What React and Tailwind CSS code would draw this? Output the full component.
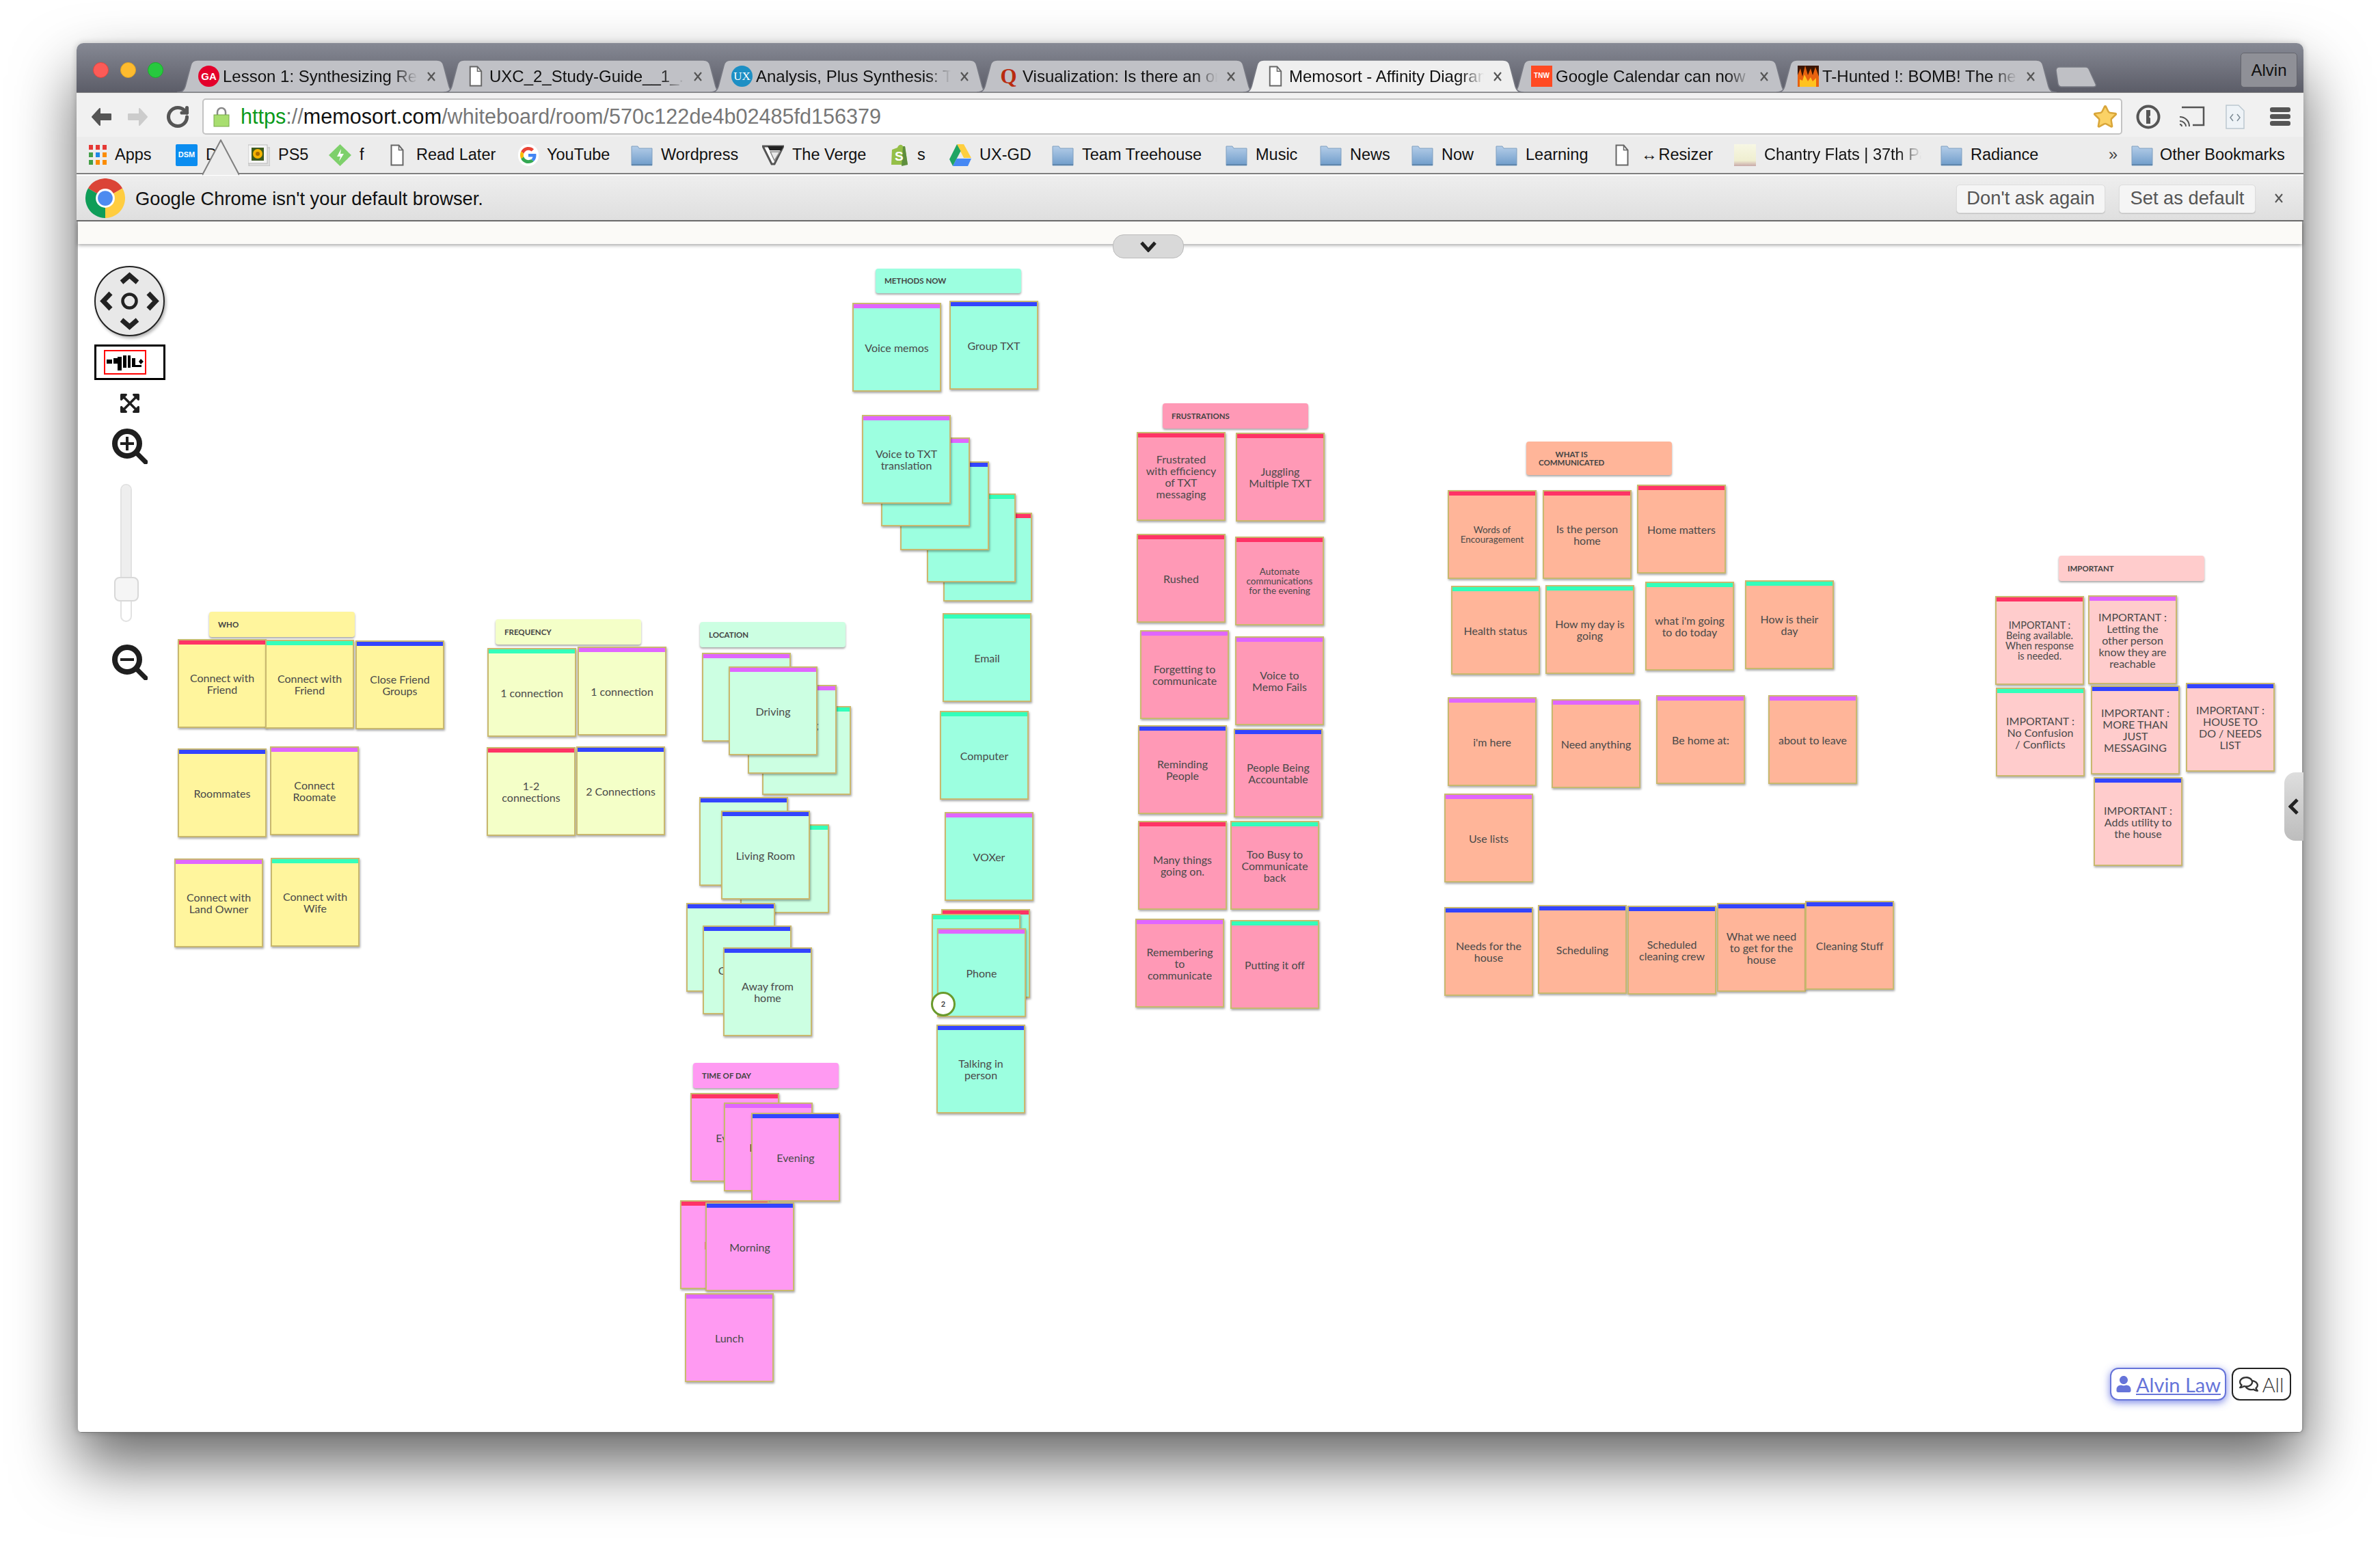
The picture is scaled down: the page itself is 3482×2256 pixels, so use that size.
import { RotateCw, Star } from "lucide-react";
import { FaUser, FaRegComments, FaExpandArrowsAlt } from "react-icons/fa";

const strip = {
  r: "bg-[#ff3366]",
  g: "bg-[#33ffbb]",
  b: "bg-[#3344ff]",
  p: "bg-[#e066ff]",
};

const YELLOW = "bg-[#fff59d]";
const LIME = "bg-[#f4ffc8]";
const MINT = "bg-[#9cffe0]";
const PALE = "bg-[#ccffe2]";
const PINK = "bg-[#ff9af2]";
const ROSE = "bg-[#ff99b6]";
const PEACH = "bg-[#ffb599]";
const BLUSH = "bg-[#ffcccc]";

const SMALL = "text-[13.5px] leading-[14px]";
const MID = "text-[14.5px] leading-[15px]";

const headers = [
  { x: 306, y: 895, h: "h-[37px]", bg: YELLOW, t: "WHO" },
  { x: 725, y: 906, h: "h-[37px]", bg: LIME, t: "FREQUENCY" },
  { x: 1024, y: 910, h: "h-[37px]", bg: PALE, t: "LOCATION" },
  { x: 1281, y: 393, h: "h-[36px]", bg: MINT, t: "METHODS NOW" },
  { x: 1014, y: 1555, h: "h-[37px]", bg: PINK, t: "TIME OF DAY" },
  { x: 1701, y: 590, h: "h-[37px]", bg: ROSE, t: "FRUSTRATIONS" },
  { x: 3012, y: 813, h: "h-[37px]", bg: BLUSH, t: "IMPORTANT" },
];

// back to front, coordinates are screen px of the board
const notes = [
  { x: 260, y: 935, c: "r", bg: YELLOW, t: "Connect with\nFriend" },
  { x: 388, y: 936, c: "g", bg: YELLOW, t: "Connect with\nFriend" },
  { x: 520, y: 937, c: "b", bg: YELLOW, t: "Close Friend\nGroups" },
  { x: 260, y: 1095, c: "b", bg: YELLOW, t: "Roommates" },
  { x: 395, y: 1092, c: "p", bg: YELLOW, t: "Connect\nRoomate" },
  { x: 255, y: 1256, c: "p", bg: YELLOW, t: "Connect with\nLand Owner" },
  { x: 396, y: 1255, c: "g", bg: YELLOW, t: "Connect with\nWife" },

  { x: 713, y: 948, c: "g", bg: LIME, t: "1 connection" },
  { x: 845, y: 946, c: "p", bg: LIME, t: "1 connection" },
  { x: 712, y: 1093, c: "r", bg: LIME, t: "1-2\nconnections" },
  { x: 843, y: 1092, c: "b", bg: LIME, t: "2 Connections" },

  { x: 1027, y: 955, c: "p", bg: PALE, t: "" },
  { x: 1115, y: 1033, c: "g", bg: PALE, t: "" },
  { x: 1094, y: 1002, c: "p", bg: PALE, t: "Commuting", s: "text-[15px] leading-[17px] pb-[12px]" },
  { x: 1066, y: 975, c: "p", bg: PALE, t: "Driving" },
  { x: 1083, y: 1206, c: "g", bg: PALE, t: "" },
  { x: 1023, y: 1166, c: "b", bg: PALE, t: "" },
  { x: 1055, y: 1186, c: "b", bg: PALE, t: "Living Room" },
  { x: 1004, y: 1321, c: "b", bg: PALE, t: "" },
  { x: 1028, y: 1354, c: "b", bg: PALE, t: "Coffee shop" },
  { x: 1058, y: 1386, c: "b", bg: PALE, t: "Away from\nhome" },

  { x: 1010, y: 1599, c: "r", bg: PINK, t: "Evening" },
  { x: 1059, y: 1613, c: "p", bg: PINK, t: "Evening" },
  { x: 1099, y: 1628, c: "b", bg: PINK, t: "Evening" },
  { x: 995, y: 1756, c: "r", bg: PINK, t: "Morning" },
  { x: 1032, y: 1759, c: "b", bg: PINK, t: "Morning" },
  { x: 1002, y: 1892, c: "p", bg: PINK, t: "Lunch" },

  { x: 1247, y: 443, c: "p", bg: MINT, t: "Voice memos" },
  { x: 1389, y: 440, c: "b", bg: MINT, t: "Group TXT" },
  { x: 1380, y: 750, c: "r", bg: MINT, t: "" },
  { x: 1356, y: 722, c: "g", bg: MINT, t: "" },
  { x: 1317, y: 675, c: "b", bg: MINT, t: "" },
  { x: 1289, y: 640, c: "p", bg: MINT, t: "" },
  { x: 1261, y: 607, c: "p", bg: MINT, t: "Voice to TXT\ntranslation" },
  { x: 1379, y: 897, c: "g", bg: MINT, t: "Email" },
  { x: 1375, y: 1040, c: "g", bg: MINT, t: "Computer" },
  { x: 1382, y: 1188, c: "p", bg: MINT, t: "VOXer" },
  { x: 1377, y: 1330, c: "r", bg: MINT, t: "" },
  { x: 1363, y: 1337, c: "g", bg: MINT, t: "" },
  { x: 1371, y: 1358, c: "p", bg: MINT, t: "Phone" },
  { x: 1370, y: 1499, c: "b", bg: MINT, t: "Talking in\nperson" },

  { x: 1663, y: 632, c: "r", bg: ROSE, t: "Frustrated\nwith efficiency\nof TXT\nmessaging" },
  { x: 1808, y: 633, c: "r", bg: ROSE, t: "Juggling\nMultiple TXT" },
  { x: 1663, y: 781, c: "r", bg: ROSE, t: "Rushed" },
  { x: 1807, y: 785, c: "r", bg: ROSE, t: "Automate\ncommunications\nfor the evening", s: SMALL },
  { x: 1668, y: 922, c: "p", bg: ROSE, t: "Forgetting to\ncommunicate" },
  { x: 1807, y: 931, c: "p", bg: ROSE, t: "Voice to\nMemo Fails" },
  { x: 1665, y: 1061, c: "b", bg: ROSE, t: "Reminding\nPeople" },
  { x: 1805, y: 1066, c: "b", bg: ROSE, t: "People Being\nAccountable" },
  { x: 1665, y: 1201, c: "r", bg: ROSE, t: "Many things\ngoing on." },
  { x: 1800, y: 1201, c: "g", bg: ROSE, t: "Too Busy to\nCommunicate\nback" },
  { x: 1661, y: 1344, c: "p", bg: ROSE, t: "Remembering\nto\ncommunicate" },
  { x: 1800, y: 1346, c: "g", bg: ROSE, t: "Putting it off" },

  { x: 2118, y: 717, c: "r", bg: PEACH, t: "Words of\nEncouragement", s: SMALL },
  { x: 2257, y: 717, c: "r", bg: PEACH, t: "Is the person\nhome" },
  { x: 2395, y: 709, c: "r", bg: PEACH, t: "Home matters" },
  { x: 2123, y: 857, c: "g", bg: PEACH, t: "Health status" },
  { x: 2261, y: 856, c: "g", bg: PEACH, t: "How my day is\ngoing" },
  { x: 2407, y: 851, c: "g", bg: PEACH, t: "what i'm going\nto do today" },
  { x: 2553, y: 849, c: "g", bg: PEACH, t: "How is their\nday" },
  { x: 2118, y: 1020, c: "p", bg: PEACH, t: "i'm here" },
  { x: 2270, y: 1023, c: "p", bg: PEACH, t: "Need anything" },
  { x: 2423, y: 1017, c: "p", bg: PEACH, t: "Be home at:" },
  { x: 2587, y: 1017, c: "p", bg: PEACH, t: "about to leave" },
  { x: 2113, y: 1161, c: "p", bg: PEACH, t: "Use lists" },
  { x: 2113, y: 1327, c: "b", bg: PEACH, t: "Needs for the\nhouse" },
  { x: 2250, y: 1324, c: "b", bg: PEACH, t: "Scheduling" },
  { x: 2381, y: 1325, c: "b", bg: PEACH, t: "Scheduled\ncleaning crew" },
  { x: 2512, y: 1321, c: "b", bg: PEACH, t: "What we need\nto get for the\nhouse" },
  { x: 2641, y: 1318, c: "b", bg: PEACH, t: "Cleaning Stuff" },

  { x: 2919, y: 872, c: "r", bg: BLUSH, t: "IMPORTANT :\nBeing available.\nWhen response\nis needed.", s: MID },
  { x: 3055, y: 871, c: "p", bg: BLUSH, t: "IMPORTANT :\nLetting the\nother person\nknow they are\nreachable" },
  { x: 2920, y: 1006, c: "g", bg: BLUSH, t: "IMPORTANT :\nNo Confusion\n/ Conflicts" },
  { x: 3059, y: 1003, c: "b", bg: BLUSH, t: "IMPORTANT :\nMORE THAN\nJUST\nMESSAGING" },
  { x: 3198, y: 999, c: "b", bg: BLUSH, t: "IMPORTANT :\nHOUSE TO\nDO / NEEDS\nLIST" },
  { x: 3063, y: 1137, c: "b", bg: BLUSH, t: "IMPORTANT :\nAdds utility to\nthe house" },
];

const tabs = [
  { icon: "ga", t: "Lesson 1: Synthesizing Research" },
  { icon: "doc", t: "UXC_2_Study-Guide__1_.pdf" },
  { icon: "ux", t: "Analysis, Plus Synthesis: Turning" },
  { icon: "q", t: "Visualization: Is there an online" },
  { icon: "doc", t: "Memosort - Affinity Diagram", active: true },
  { icon: "tnw", t: "Google Calendar can now help" },
  { icon: "fire", t: "T-Hunted !: BOMB! The new" },
];

function Folder() {
  return (
    <svg width="32" height="32" viewBox="0 0 32 32" className="shrink-0">
      <defs>
        <linearGradient id="fold" x1="0" y1="0" x2="0" y2="1">
          <stop offset="0" stopColor="#b4cde8" />
          <stop offset="1" stopColor="#6f9cca" />
        </linearGradient>
      </defs>
      <path d="M1 3h9l2 3h19v25H1z" fill="url(#fold)" stroke="#7f9fc0" strokeWidth="1" />
      <path d="M1 29h30v2H1z" fill="#5f86ad" />
    </svg>
  );
}

function DocIcon({ w = 20, h = 32 }) {
  return (
    <svg width={w} height={h} viewBox="0 0 20 32" className="shrink-0">
      <path d="M1.5 1.5h11l6 7v22h-17z" fill="#fff" stroke="#666" strokeWidth="2" />
      <path d="M12.5 1.5v7h6" fill="none" stroke="#666" strokeWidth="1.5" />
    </svg>
  );
}

function BookmarkDoc() {
  return (
    <div className="w-[26px] shrink-0">
      <DocIcon />
    </div>
  );
}

function GoogleIcon() {
  return (
    <div className="w-[30px] h-[32px] rounded-full bg-white flex items-center justify-center shrink-0">
      <svg width="24" height="24" viewBox="0 0 48 48">
        <path fill="#EA4335" d="M24 9.5c3.54 0 6.71 1.22 9.21 3.6l6.85-6.85C35.9 2.38 30.47 0 24 0 14.62 0 6.51 5.38 2.56 13.22l7.98 6.19C12.43 13.72 17.74 9.5 24 9.5z" />
        <path fill="#4285F4" d="M46.98 24.55c0-1.57-.15-3.09-.38-4.55H24v9.02h12.94c-.58 2.96-2.26 5.48-4.78 7.18l7.73 6c4.51-4.18 7.09-10.36 7.09-17.65z" />
        <path fill="#FBBC05" d="M10.53 28.59c-.48-1.45-.76-2.99-.76-4.59s.27-3.14.76-4.59l-7.98-6.19C.92 16.46 0 20.12 0 24c0 3.88.92 7.54 2.56 10.78l7.97-6.19z" />
        <path fill="#34A853" d="M24 48c6.48 0 11.93-2.13 15.89-5.81l-7.73-6c-2.15 1.45-4.92 2.3-8.16 2.3-6.26 0-11.57-4.22-13.47-9.91l-7.98 6.19C6.51 42.62 14.62 48 24 48z" />
      </svg>
    </div>
  );
}

function AppsIcon() {
  const cells = ["#e53935", "#e53935", "#e53935", "#43a047", "#1e88e5", "#fb8c00", "#43a047", "#fb8c00", "#fb8c00"];
  return (
    <div className="grid grid-cols-3 gap-[4px] w-[26px] shrink-0">
      {cells.map((c, i) => (
        <svg key={i} width="6" height="7" viewBox="0 0 6 7">
          <rect width="6" height="7" fill={c} />
        </svg>
      ))}
    </div>
  );
}

function DsmIcon() {
  return (
    <div className="w-[32px] h-[32px] rounded-[2px] bg-[#0b8df0] text-white text-[11px] leading-none font-bold flex items-center justify-center shrink-0">
      DSM
    </div>
  );
}

function Ps5Icon() {
  return (
    <svg width="32" height="32" viewBox="0 0 32 32" className="shrink-0">
      <rect x="1" y="5" width="31" height="27" fill="#ddd" stroke="#bbb" />
      <rect x="0" y="1" width="28" height="27" fill="#f4f4f4" stroke="#bbb" />
      <rect x="5" y="5" width="18" height="19" fill="#3d5a1e" />
      <circle cx="14" cy="14" r="7" fill="#f5b400" />
      <circle cx="14" cy="14" r="3" fill="#a86a00" />
    </svg>
  );
}

function GreenDiamond() {
  return (
    <svg width="33" height="32" viewBox="0 0 33 32" className="shrink-0">
      <path d="M16.5 0L33 16 16.5 32 0 16z" fill="#7ed06b" />
      <path d="M18 7l-6 11h5l-2 7 7-11h-5z" fill="#fff" />
    </svg>
  );
}

function VergeIcon() {
  return (
    <svg width="32" height="30" viewBox="0 0 32 30" className="shrink-0">
      <path d="M1 2h30L18 28 14 28z" fill="#fff" stroke="#555" strokeWidth="3" />
      <path d="M8 2h23l-3 6H11z" fill="#222" />
      <path d="M12 10h14l-8 13z" fill="#e9e9e9" stroke="#888" strokeWidth="1.5" />
    </svg>
  );
}

function ShopifyIcon() {
  return (
    <div className="relative w-[28px] h-[32px] shrink-0">
      <svg width="28" height="32" viewBox="0 0 28 32">
        <path d="M3 8l8-3c1-4 6-6 8-2l3 0 4 27-24-0z" fill="#95bf47" />
        <path d="M19 3l3 0 4 27-9 2z" fill="#5e8e3e" />
      </svg>
      <span className="absolute left-[7px] top-[8px] text-white font-bold text-[19px] leading-none">S</span>
    </div>
  );
}

function DriveIcon() {
  return (
    <svg width="32" height="32" viewBox="0 0 32 32" className="shrink-0">
      <path d="M11 0h10l11 20H21z" fill="#ffcf3f" />
      <path d="M11 0l5.5 10L5 32 0 22z" fill="#1fa463" />
      <path d="M10.5 21H32l-5 11H5z" fill="#4688f4" />
    </svg>
  );
}

function ThumbIcon() {
  return (
    <svg width="32" height="32" viewBox="0 0 32 32" className="shrink-0">
      <defs>
        <linearGradient id="thumb" x1="0" y1="0" x2="0" y2="1">
          <stop offset="0" stopColor="#f7f7e4" />
          <stop offset="0.75" stopColor="#efeed0" />
          <stop offset="1" stopColor="#c8a9a9" />
        </linearGradient>
      </defs>
      <rect width="32" height="32" fill="url(#thumb)" />
    </svg>
  );
}

const bookmarks = [
  { w: "w-[127px]", icon: <AppsIcon />, t: "Apps" },
  { w: "w-[106px]", icon: <DsmIcon />, t: "D" },
  { w: "w-[118px]", icon: <Ps5Icon />, t: "PS5" },
  { w: "w-[90px]", icon: <GreenDiamond />, t: "f" },
  { w: "w-[187px]", icon: <BookmarkDoc />, t: "Read Later" },
  { w: "w-[165px]", icon: <GoogleIcon />, t: "YouTube" },
  { w: "w-[192px]", icon: <Folder />, t: "Wordpress" },
  { w: "w-[187px]", icon: <VergeIcon />, t: "The Verge" },
  { w: "w-[87px]", icon: <ShopifyIcon />, t: "s" },
  { w: "w-[150px]", icon: <DriveIcon />, t: "UX-GD" },
  { w: "w-[254px]", icon: <Folder />, t: "Team Treehouse" },
  { w: "w-[138px]", icon: <Folder />, t: "Music" },
  { w: "w-[134px]", icon: <Folder />, t: "News" },
  { w: "w-[123px]", icon: <Folder />, t: "Now" },
  { w: "w-[175px]", icon: <Folder />, t: "Learning" },
  { w: "w-[174px]", icon: <BookmarkDoc />, t: "↔\u200AResizer" },
  { w: "w-[302px]", icon: <ThumbIcon />, t: "Chantry Flats | 37th Parallel", fade: true },
  { w: "w-[246px]", icon: <Folder />, t: "Radiance" },
];

function Favicon({ name }) {
  if (name === "doc") return <DocIcon w={20} h={31} />;
  if (name === "ga")
    return (
      <div className="w-[31px] h-[31px] rounded-full bg-[#e4002b] text-white text-[15px] leading-none font-bold flex items-center justify-center">
        GA
      </div>
    );
  if (name === "ux")
    return (
      <div className="w-[31px] h-[31px] rounded-full bg-[#1d8fc4] text-white text-[17px] leading-none font-['Liberation_Serif',serif] flex items-center justify-center">
        UX
      </div>
    );
  if (name === "q")
    return (
      <div className="w-[24px] h-[31px] text-[#b92b0f] text-[31px] leading-[31px] font-bold font-['Liberation_Serif',serif] text-center">
        Q
      </div>
    );
  if (name === "tnw")
    return (
      <div className="w-[31px] h-[31px] bg-[#ff4a22] text-white text-[10px] leading-none font-bold flex items-center justify-center">
        TNW
      </div>
    );
  return (
    <svg width="31" height="31" viewBox="0 0 31 31">
      <rect width="31" height="31" fill="#3a1503" />
      <path d="M0 31V14l4-10 3 12 4-16 4 14 4-10 3 10 4-12 5 14v15z" fill="#e8620f" />
      <path d="M3 31V20l4 2 3-9 5 10 4-6 3 6 5-5v13z" fill="#ffc21f" />
    </svg>
  );
}

function Tab({ icon, t, active }) {
  return (
    <div className={`relative w-[410px] h-[48px] -ml-[20px] first:ml-0 shrink-0 ${active ? "z-10" : ""}`}>
      <svg width="410" height="48" viewBox="0 0 410 48" className="absolute inset-0">
        <path
          d="M0 48c8 0 11-3 13-12L20 9c1-5 5-8 10-8h350c5 0 9 3 10 8l7 27c2 9 5 12 13 12z"
          fill={active ? "#efefef" : "#c0c1c6"}
          stroke="#777983"
          strokeWidth="1.5"
        />
      </svg>
      <div className="relative h-full flex items-center pl-[31px] pt-[2px]">
        <div className="w-[31px] flex justify-center shrink-0 -mt-[2px]">
          <Favicon name={icon} />
        </div>
        <div className="w-[285px] ml-[5px] overflow-hidden whitespace-nowrap text-[24px] leading-[30px] text-[#111] [mask-image:linear-gradient(to_right,black_88%,transparent)]">
          {t}
        </div>
        <svg width="14" height="14" viewBox="0 0 14 14" className="ml-[13px] shrink-0">
          <path d="M2 1l10 12M12 1L2 13" stroke="#555" strokeWidth="2.2" />
        </svg>
      </div>
    </div>
  );
}

function Note({ x, y, c, bg, t, s }) {
  return (
    <div
      className={`absolute w-[130px] h-[130px] border-2 border-[#c9b86e] flex items-center justify-center text-center whitespace-pre-line text-[#4a4a4a] font-['Lato',sans-serif] shadow-[1px_2px_3px_rgba(0,0,0,0.35)] ${bg} ${s || "text-[16px] leading-[17px]"}`}
      style={{ left: x - 112, top: y - 324 }}
    >
      <div className={`absolute left-0 right-0 top-0 h-[6px] ${strip[c]}`} />
      {t}
    </div>
  );
}

function Header({ x, y, h, bg, t }) {
  return (
    <div
      className={`absolute w-[213px] ${h} rounded-[4px] pl-[13px] flex items-center text-[11.5px] font-bold text-[#444] font-['Lato',sans-serif] shadow-[0_2px_3px_rgba(0,0,0,0.35)] ${bg}`}
      style={{ left: x - 112, top: y - 324 }}
    >
      {t}
    </div>
  );
}

function ChromeLogo() {
  return (
    <svg width="58" height="58" viewBox="0 0 48 48" className="shrink-0">
      <path d="M24 24L3.2 12A24 24 0 0 1 44.8 12z" fill="#db4437" />
      <path d="M24 24L44.8 12A24 24 0 0 1 24 48z" fill="#ffcd40" />
      <path d="M24 24L24 48A24 24 0 0 1 3.2 12z" fill="#0f9d58" />
      <circle cx="24" cy="24" r="11.5" fill="#fff" />
      <circle cx="24" cy="24" r="9" fill="#4d8bf0" />
    </svg>
  );
}

function ZoomIcon({ plus }) {
  return (
    <svg width="52" height="52" viewBox="0 0 52 52">
      <circle cx="22" cy="22" r="18" fill="none" stroke="#1f1f1f" strokeWidth="8" />
      <path d="M35 35l14 14" stroke="#1f1f1f" strokeWidth="7" strokeLinecap="round" />
      <path d="M12 22h20" stroke="#1f1f1f" strokeWidth="4" />
      {plus && <path d="M22 12v20" stroke="#1f1f1f" strokeWidth="4" />}
    </svg>
  );
}

function NavPad() {
  return (
    <div className="w-[103px] h-[103px] rounded-full bg-[#e8e8e8] border-2 border-[#222] shadow-[2px_3px_4px_rgba(0,0,0,0.3)] flex items-center justify-center">
      <svg width="99" height="99" viewBox="0 0 99 99" fill="none" stroke="#222" strokeWidth="7">
        <path d="M38 22l11.5-10L61 22" />
        <path d="M38 77l11.5 10L61 77" />
        <path d="M22 38L11 49.5 22 61" />
        <path d="M77 38l11 11.5L77 61" />
        <circle cx="49.5" cy="49.5" r="10" strokeWidth="4.5" />
      </svg>
    </div>
  );
}

function MiniMap() {
  return (
    <div className="w-[104px] h-[52px] border-[3px] border-black flex items-center pl-[11px] bg-white">
      <div className="w-[62px] h-[36px] border-2 border-[#f00] flex items-center justify-center">
        <svg width="54" height="26" viewBox="0 0 54 26" className="blur-[0.6px]">
          <path d="M0 9h8v6H0zM10 7h9v8h-9zM16 5h6v20h-6zM24 3h5v18h-5zM31 3h4v18h-4zM37 7h5v10h9v3H37z" fill="#000" />
          <path d="M50 8l4 4-4 4-3-4z" fill="#000" />
        </svg>
      </div>
    </div>
  );
}

function ZoomSlider() {
  return (
    <div className="relative w-[17px] h-[202px] -ml-[10px] rounded-full border-2 border-[#e2e2e2] bg-white overflow-visible">
      <div className="h-[140px] rounded-t-full bg-[#eeeeee]" />
      <div className="absolute -left-[11px] top-[134px] w-[36px] h-[36px] rounded-[8px] border-2 border-[#d8d8d8] bg-[#f5f5f5]" />
    </div>
  );
}

export default function App() {
  return (
    <div className="w-[3482px] h-[2256px] bg-white pl-[112px] pt-[63px] overflow-hidden font-['Liberation_Sans',Arial,sans-serif]">
      <div className="w-[3258px] h-[2033px] flex flex-col rounded-t-[10px] rounded-b-[6px] shadow-[0_46px_90px_rgba(0,0,0,0.6),0_0_10px_rgba(0,0,0,0.2)]">
        {/* tab strip */}
        <div className="h-[73px] flex items-end rounded-t-[10px] bg-gradient-to-b from-[#868994] to-[#5c5d68] border-b border-[#8a8a8a]">
          <div className="flex gap-[17px] self-start mt-[28px] ml-[24px] mr-[20px]">
            <div className="w-[23px] h-[23px] rounded-full bg-[#fc5b57] border border-[#e0443e]" />
            <div className="w-[23px] h-[23px] rounded-full bg-[#febb2e] border border-[#dea123]" />
            <div className="w-[23px] h-[23px] rounded-full bg-[#27c93f] border border-[#1aab29]" />
          </div>
          <div className="flex items-end">
            {tabs.map((tab, i) => (
              <Tab key={i} {...tab} />
            ))}
          </div>
          <svg width="62" height="31" viewBox="0 0 62 31" className="self-start mt-[34px] -ml-[3px]">
            <path d="M2 6c0-3 2-5 5-5h38c3 0 5 2 6 5l9 20c1 2 0 4-3 4H10c-3 0-4-1-5-4z" fill="#bfc0c5" stroke="#777983" strokeWidth="1.5" />
          </svg>
          <div className="ml-auto mr-[9px] self-start mt-[14px] w-[83px] h-[51px] rounded-[5px] bg-[#8f9097] border border-[#63646c] flex items-center justify-center text-[24px] text-[#111]">
            Alvin
          </div>
        </div>

        {/* toolbar */}
        <div className="h-[64px] bg-[#f1f1f1] flex pt-[8px]">
          <div className="w-[184px] h-[53px] flex items-center shrink-0 pl-[20px]">
            <svg width="32" height="28" viewBox="0 0 32 28" className="shrink-0">
              <path d="M14 2L3 14l11 12v-8h16v-8H14z" fill="#555" stroke="#555" strokeWidth="2" strokeLinejoin="round" />
            </svg>
            <svg width="32" height="28" viewBox="0 0 32 28" className="ml-[22px] shrink-0">
              <path d="M18 2l11 12-11 12v-8H2v-8h16z" fill="#ccc" stroke="#ccc" strokeWidth="2" strokeLinejoin="round" />
            </svg>
            <RotateCw className="ml-[24px] shrink-0 text-[#555]" size={36} strokeWidth={3.4} />
          </div>
          <div className="w-[2809px] h-[53px] bg-white rounded-[5px] border-2 border-[#c3c3c3] flex items-center pl-[14px] pr-[4px] shrink-0">
            <svg width="24" height="30" viewBox="0 0 24 30" className="shrink-0">
              <path d="M6 13V8a6 6 0 0 1 12 0v5" fill="none" stroke="#888" strokeWidth="2.5" />
              <rect x="1" y="12" width="22" height="17" fill="#a8de6f" stroke="#78a84a" />
            </svg>
            <div className="ml-[16px] text-[30.6px] leading-none whitespace-nowrap text-[#777]">
              <span className="text-[#0a9a1a]">https</span>://<span className="text-[#111]">memosort.com</span>/whiteboard/room/570c122de4b02485fd156379
            </div>
            <Star className="ml-auto shrink-0 text-[#d9a63a] fill-[#fbd266]" size={38} strokeWidth={1.6} />
          </div>
          <div className="flex-1 h-[53px] flex items-center pl-[20px]">
            <svg width="36" height="36" viewBox="0 0 36 36" className="shrink-0">
              <circle cx="18" cy="18" r="15.5" fill="none" stroke="#555" strokeWidth="4" />
              <path d="M15 8h6v8l-2 2 2 2v8h-6z" fill="#555" />
            </svg>
            <svg width="38" height="32" viewBox="0 0 38 32" fill="none" stroke="#555" className="ml-[27px] shrink-0">
              <path d="M4 2h32v26H20" strokeWidth="2.5" />
              <path d="M1 16c8 0 14 6 14 14M1 22c5 0 9 4 9 8M1 27c2 0 3 1 3 3" strokeWidth="2" />
            </svg>
            <svg width="30" height="36" viewBox="0 0 30 36" className="ml-[29px] shrink-0">
              <path d="M2 1h18l8 8v26H2z" fill="#eef3f7" stroke="#bcc8d0" strokeWidth="1.5" />
              <path d="M12 14l-4 5 4 5M18 14l4 5-4 5" fill="none" stroke="#7b8a94" strokeWidth="1.5" />
            </svg>
            <div className="ml-[36px] w-[30px] flex flex-col gap-[3px] shrink-0">
              <div className="h-[7px] rounded-[3px] bg-[#555]" />
              <div className="h-[7px] rounded-[3px] bg-[#555]" />
              <div className="h-[7px] rounded-[3px] bg-[#555]" />
            </div>
          </div>
        </div>

        {/* bookmarks */}
        <div className="relative h-[53px] bg-[#ececec] flex items-center pl-[18px] text-[23.5px] text-[#111] whitespace-nowrap">
          {bookmarks.map((b, i) => (
            <div key={i} className={`flex items-center gap-[12px] shrink-0 ${b.w}`}>
              {b.icon}
              {b.fade ? (
                <span className="w-[230px] overflow-hidden [mask-image:linear-gradient(to_right,black_85%,transparent)]">{b.t}</span>
              ) : (
                <span>{b.t}</span>
              )}
            </div>
          ))}
          <div className="w-[33px] text-[#444] shrink-0">»</div>
          <div className="flex items-center gap-[10px] shrink-0">
            <Folder />
            <span>Other Bookmarks</span>
          </div>
          <svg width="54" height="54" viewBox="0 0 54 54" className="absolute left-[184px] top-[4px]">
            <path d="M0 52L27 1l27 51z" fill="#ececec" />
            <path d="M0 52L27 1l27 51" fill="none" stroke="#7f7f7f" strokeWidth="2" />
          </svg>
        </div>
        <div className="h-[2px] bg-[#7f7f7f]" />
        <div className="h-[2px] bg-white" />

        {/* default browser bar */}
        <div className="h-[67px] border-b-2 border-[#6f6f6f] bg-gradient-to-b from-[#eeeeee] to-[#dfdfdf] flex items-center pl-[13px] pr-[29px] text-[27.3px]">
          <ChromeLogo />
          <span className="ml-[15px] mt-[3px] text-[#111]">Google Chrome isn't your default browser.</span>
          <div className="ml-auto mt-[2px] w-[218px] h-[42px] rounded-[5px] bg-[#f5f5f5] border border-[#ddd] shadow-[0_1px_1px_rgba(0,0,0,0.15)] flex items-center justify-center text-[#555]">
            Don't ask again
          </div>
          <div className="ml-[20px] mt-[2px] w-[200px] h-[42px] rounded-[5px] bg-[#f5f5f5] border border-[#ddd] shadow-[0_1px_1px_rgba(0,0,0,0.15)] flex items-center justify-center text-[#555]">
            Set as default
          </div>
          <svg width="14" height="14" viewBox="0 0 14 14" className="ml-[27px]">
            <path d="M2 1l10 12M12 1L2 13" stroke="#555" strokeWidth="2" />
          </svg>
        </div>

        {/* whiteboard */}
        <div className="relative flex-1 bg-white rounded-b-[6px] shadow-[inset_2px_0_0_#aaaaaa,inset_-2px_0_0_#999999,inset_0_-1px_0_#777777]">
          <div className="h-[33px] mx-[2px] bg-[#fbfaf7] shadow-[0_2px_5px_rgba(0,0,0,0.35)]" />

          {headers.map((h, i) => (
            <Header key={i} {...h} />
          ))}
          <div className="absolute left-[2121px] top-[322px] w-[213px] h-[49px] rounded-[4px] flex items-center pl-[18px] text-[11.5px] leading-[12px] font-bold text-[#444] text-center font-['Lato',sans-serif] bg-[#ffb599] shadow-[0_2px_3px_rgba(0,0,0,0.35)]">
            WHAT IS
            <br />
            COMMUNICATED
          </div>
          {notes.map((n, i) => (
            <Note key={i} {...n} />
          ))}

          <div className="absolute left-[1250px] top-[1127px] w-[36px] h-[36px] rounded-full bg-white border-[3px] border-[#6a9a2c] flex items-center justify-center text-[11px] font-bold text-[#444] font-['Lato',sans-serif]">
            2
          </div>

          {/* map controls */}
          <div className="absolute left-[25px] top-[65px] w-[105px] flex flex-col items-center">
            <NavPad />
            <div className="mt-[12px]">
              <MiniMap />
            </div>
            <FaExpandArrowsAlt className="mt-[18px] text-[#1f1f1f]" size={32} />
            <div className="mt-[21px]">
              <ZoomIcon plus />
            </div>
            <div className="mt-[29px]">
              <ZoomSlider />
            </div>
            <div className="mt-[33px]">
              <ZoomIcon />
            </div>
          </div>

          {/* collapse tabs */}
          <div className="absolute left-[1516px] top-[19px] w-[104px] h-[35px] rounded-[16px] bg-[#d9d9d9] border border-[#bbb] flex items-center justify-center">
            <svg width="24" height="16" viewBox="0 0 24 16" fill="none" stroke="#222" strokeWidth="5">
              <path d="M2 2l10 11L22 2" />
            </svg>
          </div>
          <div className="absolute left-[3230px] top-[806px] w-[28px] h-[100px] rounded-l-[16px] bg-gradient-to-b from-[#dedede] to-[#bdbdbd] flex items-center justify-center">
            <svg width="16" height="24" viewBox="0 0 16 24" fill="none" stroke="#222" strokeWidth="5">
              <path d="M13 2L3 12l10 10" />
            </svg>
          </div>

          {/* chat filters */}
          <div className="absolute right-[18px] bottom-[47px] flex gap-[8px] font-['Lato',sans-serif] text-[29px] leading-none">
            <div className="w-[170px] h-[48px] rounded-[12px] border-2 border-[#6674d9] bg-white shadow-[0_3px_12px_rgba(70,85,220,0.7)] flex items-center justify-center gap-[6px] text-[#6674d9] underline">
              <FaUser size={24} />
              Alvin Law
            </div>
            <div className="w-[87px] h-[48px] rounded-[12px] border-2 border-[#222] bg-white flex items-center justify-center gap-[6px] text-[#333] font-light">
              <FaRegComments size={28} />
              All
            </div>
          </div>
        </div>
      </div>
    </div>
  );
}
